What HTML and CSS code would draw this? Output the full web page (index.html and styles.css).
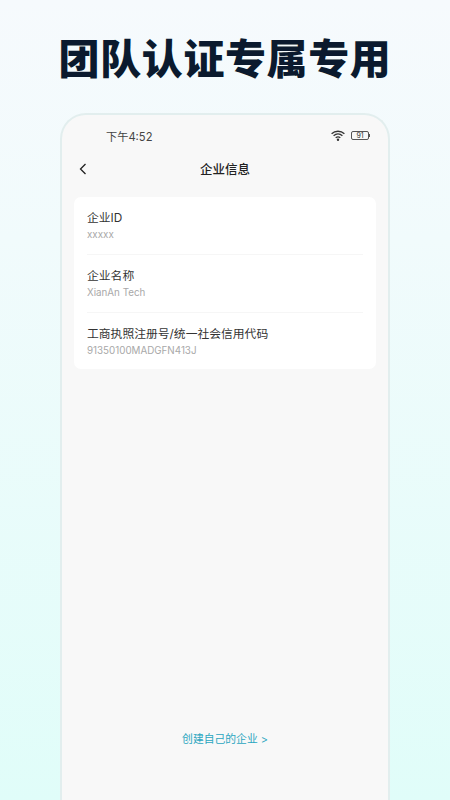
FILE: index.html
```html
<!DOCTYPE html>
<html lang="zh-CN">
<head>
    <meta charset="UTF-8">
    <meta name="viewport" content="width=device-width, initial-scale=1.0">
    <title>企业信息</title>
    <link rel="stylesheet" href="styles.css">
</head>
<body>
    <h1 class="headline">团队认证专属专用</h1>
    <div class="phone">
        <!-- Status bar -->
        <div class="status-bar">
            <span class="status-time">下午4:52</span>
            <div class="status-icons">
                <svg class="wifi-icon" width="14" height="11" viewBox="0 0 14 11">
                    <path d="M.6 3.8C4.2.4 9.8.4 13.4 3.8" fill="none" stroke="#333" stroke-width="1.3"/>
                    <path d="M2.6 5.8c2.6-2.4 6.2-2.4 8.8 0" fill="none" stroke="#333" stroke-width="1.3"/>
                    <path d="M4.7 7.8c1.4-1.2 3.2-1.2 4.6 0" fill="none" stroke="#333" stroke-width="1.3"/>
                    <circle cx="7" cy="9.7" r="1.2" fill="#333"/>
                </svg>
                <div class="battery"><span class="battery-level">91</span></div>
                <span class="battery-tip"></span>
            </div>
        </div>

        <!-- Nav bar -->
        <div class="nav-bar">
            <svg class="back-icon" width="8" height="12" viewBox="0 0 8 12">
                <path d="M6.5 1L1.5 6l5 5" fill="none" stroke="#222" stroke-width="1.3"/>
            </svg>
            <span class="nav-title">企业信息</span>
        </div>

        <!-- Info card -->
        <div class="info-card">
            <div class="info-row">
                <p class="info-label">企业ID</p>
                <p class="info-value">xxxxx</p>
            </div>
            <div class="info-row">
                <p class="info-label">企业名称</p>
                <p class="info-value">XianAn Tech</p>
            </div>
            <div class="info-row">
                <p class="info-label">工商执照注册号/统一社会信用代码</p>
                <p class="info-value">91350100MADGFN413J</p>
            </div>
        </div>

        <a class="create-link" href="#">创建自己的企业 &gt;</a>
    </div>
</body>
</html>
```

FILE: styles.css
```css
/* Basic Reset */
* {
    margin: 0;
    padding: 0;
    box-sizing: border-box;
}

html, body {
    height: 800px;
    overflow: hidden;
}

body {
    font-family: Inter, "Noto Sans CJK SC", sans-serif;
    background: linear-gradient(180deg, #f6fafd 0%, #f1fbfc 30%, #e0fdf9 100%);
    display: flex;
    flex-direction: column;
    align-items: center;
    padding-top: 30px;
}

/* Heading */
.headline {
    font-family: "Noto Sans CJK SC", sans-serif;
    font-size: 41px;
    line-height: 52px;
    font-weight: 900;
    letter-spacing: 0.6px;
    color: #0b1a2e;
}

/* Phone frame */
.phone {
    width: 330px;
    flex: 1;
    margin-top: 31px;
    background: #f8f8f8;
    border: 2px solid #e2eeee;
    border-bottom: none;
    border-radius: 26px 26px 0 0;
    padding: 0 12px;
    display: flex;
    flex-direction: column;
}

/* Status bar */
.status-bar {
    height: 41px;
    padding: 0 6px 0 32px;
    display: flex;
    align-items: center;
    justify-content: space-between;
}

.status-time {
    font-size: 11.2px;
    color: #444;
}

.status-icons {
    display: flex;
    align-items: center;
}

.wifi-icon {
    margin-right: 6px;
}

.battery {
    width: 18px;
    height: 9px;
    border: 1px solid #555;
    border-radius: 2px;
    display: flex;
    align-items: center;
    justify-content: center;
}

.battery-level {
    font-size: 7px;
    line-height: 7px;
    color: #333;
}

.battery-tip {
    width: 1px;
    height: 3px;
    background: #555;
}

/* Nav bar */
.nav-bar {
    height: 24px;
    position: relative;
    display: flex;
    align-items: center;
    justify-content: center;
}

.back-icon {
    position: absolute;
    left: 5px;
    top: 7px;
}

.nav-title {
    font-size: 12.5px;
    font-weight: 500;
    color: #222;
}

/* Info card */
.info-card {
    margin-top: 17px;
    background: #ffffff;
    border-radius: 7px;
    padding: 0 13px;
}

.info-row {
    height: 58px;
    padding-top: 12.5px;
    border-bottom: 1px solid #f6f6f6;
}

.info-row:last-child {
    height: 56px;
    border-bottom: none;
}

.info-label {
    font-size: 11.8px;
    line-height: 17px;
    color: #333;
}

.info-value {
    margin-top: 1.5px;
    font-size: 9.8px;
    line-height: 13px;
    color: #a8a8a8;
}

/* Create link */
.create-link {
    margin-top: 363px;
    text-align: center;
    font-size: 10.8px;
    line-height: 16px;
    color: #2ba6c0;
    text-decoration: none;
}
```
